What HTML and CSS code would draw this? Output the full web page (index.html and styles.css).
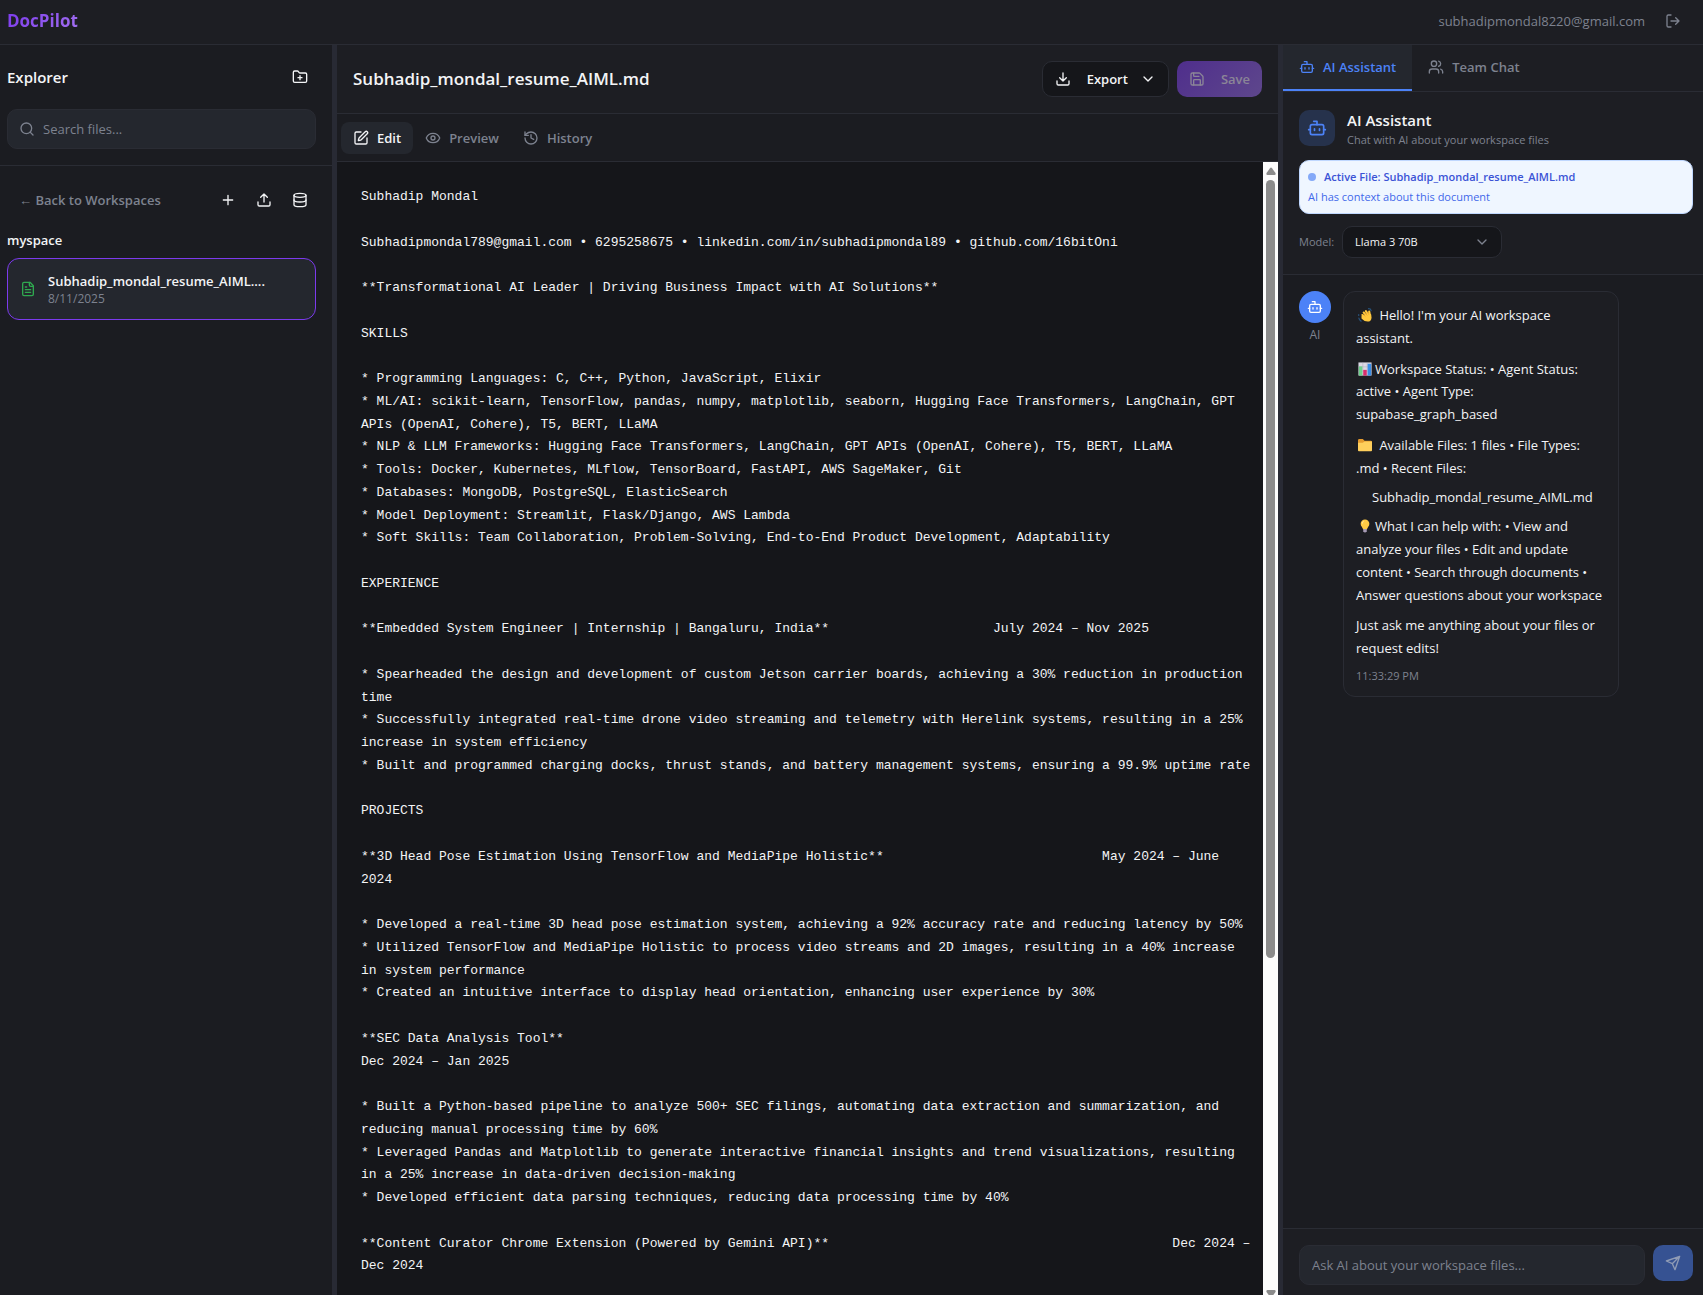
FILE: index.html
```html
<!DOCTYPE html>
<html lang="en">

<head>
    <meta charset="UTF-8">
    <meta name="viewport" content="width=device-width, initial-scale=1.0">
    <title>DocPilot</title>
    <link rel="stylesheet" href="styles.css">
</head>

<body>

    <!-- shared icons -->
    <svg class="sprite" aria-hidden="true">
        <symbol id="icon-bot" viewBox="0 0 24 24">
            <path d="M12 8V4H8" />
            <rect width="16" height="12" x="4" y="8" rx="2" />
            <path d="M2 14h2M20 14h2M15 13v2M9 13v2" />
        </symbol>
        <symbol id="icon-chevron" viewBox="0 0 24 24">
            <path d="m6 9 6 6 6-6" />
        </symbol>
    </svg>

    <header class="topbar">
        <h1 class="logo">DocPilot</h1>
        <div class="account">
            <span>subhadipmondal8220@gmail.com</span>
            <button class="icon-btn" aria-label="Log out">
                <svg class="icon" viewBox="0 0 24 24"><path d="M9 21H5a2 2 0 0 1-2-2V5a2 2 0 0 1 2-2h4" /><path d="m16 17 5-5-5-5M21 12H9" /></svg>
            </button>
        </div>
    </header>

    <div class="layout">

        <aside class="explorer">
            <div class="explorer-head">
                <div class="row">
                    <h2>Explorer</h2>
                    <button class="icon-btn" aria-label="New folder">
                        <svg class="icon" viewBox="0 0 24 24"><path d="M12 10v6M9 13h6" /><path d="M20 20a2 2 0 0 0 2-2V8a2 2 0 0 0-2-2h-7.9a2 2 0 0 1-1.69-.9L9.6 3.9A2 2 0 0 0 7.93 3H4a2 2 0 0 0-2 2v13a2 2 0 0 0 2 2Z" /></svg>
                    </button>
                </div>
                <label class="search">
                    <svg class="icon" viewBox="0 0 24 24"><circle cx="11" cy="11" r="8" /><path d="m21 21-4.3-4.3" /></svg>
                    <input type="text" placeholder="Search files..." aria-label="Search files">
                </label>
            </div>

            <div class="explorer-body">
                <div class="row">
                    <button class="back">← Back to Workspaces</button>
                    <div class="actions">
                        <button class="icon-btn" aria-label="New file">
                            <svg class="icon" viewBox="0 0 24 24"><path d="M5 12h14M12 5v14" /></svg>
                        </button>
                        <button class="icon-btn" aria-label="Upload">
                            <svg class="icon" viewBox="0 0 24 24"><path d="M21 15v4a2 2 0 0 1-2 2H5a2 2 0 0 1-2-2v-4" /><path d="m17 8-5-5-5 5M12 3v12" /></svg>
                        </button>
                        <button class="icon-btn" aria-label="Database">
                            <svg class="icon" viewBox="0 0 24 24"><ellipse cx="12" cy="5" rx="9" ry="3" /><path d="M3 5v14a9 3 0 0 0 18 0V5" /><path d="M3 12a9 3 0 0 0 18 0" /></svg>
                        </button>
                    </div>
                </div>
                <h3>myspace</h3>
                <button class="file">
                    <svg class="icon" viewBox="0 0 24 24"><path d="M15 2H6a2 2 0 0 0-2 2v16a2 2 0 0 0 2 2h12a2 2 0 0 0 2-2V7Z" /><path d="M14 2v4a2 2 0 0 0 2 2h4M10 9H8M16 13H8M16 17H8" /></svg>
                    <span class="file-info">
                        <strong>Subhadip_mondal_resume_AIML....</strong>
                        <small>8/11/2025</small>
                    </span>
                </button>
            </div>
        </aside>

        <div class="divider"></div>

        <main class="editor">
            <div class="editor-head">
                <h2>Subhadip_mondal_resume_AIML.md</h2>
                <div class="editor-buttons">
                    <button class="btn-export">
                        <svg class="icon" viewBox="0 0 24 24"><path d="M21 15v4a2 2 0 0 1-2 2H5a2 2 0 0 1-2-2v-4" /><path d="m7 10 5 5 5-5M12 15V3" /></svg>
                        <span>Export</span>
                        <svg class="icon"><use href="#icon-chevron" /></svg>
                    </button>
                    <button class="btn-save" disabled>
                        <svg class="icon" viewBox="0 0 24 24"><path d="M15.2 3a2 2 0 0 1 1.4.6l3.8 3.8a2 2 0 0 1 .6 1.4V19a2 2 0 0 1-2 2H5a2 2 0 0 1-2-2V5a2 2 0 0 1 2-2z" /><path d="M17 21v-7a1 1 0 0 0-1-1H8a1 1 0 0 0-1 1v7M7 3v4a1 1 0 0 0 1 1h7" /></svg>
                        Save
                    </button>
                </div>
            </div>

            <nav class="tabs">
                <button class="tab active">
                    <svg class="icon" viewBox="0 0 24 24"><path d="M12 3H5a2 2 0 0 0-2 2v14a2 2 0 0 0 2 2h14a2 2 0 0 0 2-2v-7" /><path d="M18.375 2.625a1 1 0 0 1 3 3l-9.013 9.014a2 2 0 0 1-.853.505l-2.873.84a.5.5 0 0 1-.62-.62l.84-2.873a2 2 0 0 1 .506-.852z" /></svg>
                    Edit
                </button>
                <button class="tab">
                    <svg class="icon" viewBox="0 0 24 24"><path d="M2.062 12.348a1 1 0 0 1 0-.696 10.75 10.75 0 0 1 19.876 0 1 1 0 0 1 0 .696 10.75 10.75 0 0 1-19.876 0" /><circle cx="12" cy="12" r="3" /></svg>
                    Preview
                </button>
                <button class="tab">
                    <svg class="icon" viewBox="0 0 24 24"><path d="M3 12a9 9 0 1 0 9-9 9.75 9.75 0 0 0-6.74 2.74L3 8" /><path d="M3 3v5h5M12 7v5l4 2" /></svg>
                    History
                </button>
            </nav>

            <div class="document">
                <textarea aria-label="Document text" spellcheck="false">Subhadip Mondal

Subhadipmondal789@gmail.com • 6295258675 • linkedin.com/in/subhadipmondal89 • github.com/16bitOni

**Transformational AI Leader | Driving Business Impact with AI Solutions**

SKILLS

* Programming Languages: C, C++, Python, JavaScript, Elixir
* ML/AI: scikit-learn, TensorFlow, pandas, numpy, matplotlib, seaborn, Hugging Face Transformers, LangChain, GPT APIs (OpenAI, Cohere), T5, BERT, LLaMA
* NLP &amp; LLM Frameworks: Hugging Face Transformers, LangChain, GPT APIs (OpenAI, Cohere), T5, BERT, LLaMA
* Tools: Docker, Kubernetes, MLflow, TensorBoard, FastAPI, AWS SageMaker, Git
* Databases: MongoDB, PostgreSQL, ElasticSearch
* Model Deployment: Streamlit, Flask/Django, AWS Lambda
* Soft Skills: Team Collaboration, Problem-Solving, End-to-End Product Development, Adaptability

EXPERIENCE

**Embedded System Engineer | Internship | Bangaluru, India**                     July 2024 – Nov 2025

* Spearheaded the design and development of custom Jetson carrier boards, achieving a 30% reduction in production time
* Successfully integrated real-time drone video streaming and telemetry with Herelink systems, resulting in a 25% increase in system efficiency
* Built and programmed charging docks, thrust stands, and battery management systems, ensuring a 99.9% uptime rate

PROJECTS

**3D Head Pose Estimation Using TensorFlow and MediaPipe Holistic**                            May 2024 – June 2024

* Developed a real-time 3D head pose estimation system, achieving a 92% accuracy rate and reducing latency by 50%
* Utilized TensorFlow and MediaPipe Holistic to process video streams and 2D images, resulting in a 40% increase in system performance
* Created an intuitive interface to display head orientation, enhancing user experience by 30%

**SEC Data Analysis Tool**
Dec 2024 – Jan 2025

* Built a Python-based pipeline to analyze 500+ SEC filings, automating data extraction and summarization, and reducing manual processing time by 60%
* Leveraged Pandas and Matplotlib to generate interactive financial insights and trend visualizations, resulting in a 25% increase in data-driven decision-making
* Developed efficient data parsing techniques, reducing data processing time by 40%

**Content Curator Chrome Extension (Powered by Gemini API)**                                            Dec 2024 – Dec 2024
</textarea>
                <div class="scrollbar" aria-hidden="true">
                    <svg class="arrow" viewBox="0 0 10 8"><path d="M4 1.2Q5 0 6 1.2L9.5 6Q10 8 8.5 8h-7Q0 8 .5 6Z" /></svg>
                    <div class="thumb"></div>
                    <svg class="arrow down" viewBox="0 0 10 8"><path d="M4 1.2Q5 0 6 1.2L9.5 6Q10 8 8.5 8h-7Q0 8 .5 6Z" /></svg>
                </div>
            </div>
        </main>

        <div class="divider"></div>

        <aside class="assistant">
            <nav class="chat-tabs">
                <button class="chat-tab active">
                    <svg class="icon"><use href="#icon-bot" /></svg>
                    AI Assistant
                </button>
                <button class="chat-tab">
                    <svg class="icon" viewBox="0 0 24 24"><path d="M16 21v-2a4 4 0 0 0-4-4H6a4 4 0 0 0-4 4v2" /><circle cx="9" cy="7" r="4" /><path d="M22 21v-2a4 4 0 0 0-3-3.87M16 3.13a4 4 0 0 1 0 7.75" /></svg>
                    Team Chat
                </button>
            </nav>

            <section class="chat-head">
                <div class="chat-title">
                    <div class="bot-box"><svg class="icon"><use href="#icon-bot" /></svg></div>
                    <div>
                        <h2>AI Assistant</h2>
                        <p>Chat with AI about your workspace files</p>
                    </div>
                </div>
                <div class="active-file">
                    <div class="active-name"><span class="dot"></span>Active File: Subhadip_mondal_resume_AIML.md</div>
                    <div>AI has context about this document</div>
                </div>
                <div class="model">
                    <label for="model">Model:</label>
                    <div class="select-box">
                        <select id="model">
                            <option>Llama 3 70B</option>
                        </select>
                        <svg class="icon"><use href="#icon-chevron" /></svg>
                    </div>
                </div>
            </section>

            <section class="messages">
                <div class="sender">
                    <div class="avatar"><svg class="icon"><use href="#icon-bot" /></svg></div>
                    <span>AI</span>
                </div>
                <div class="bubble">
                    <p>
                        <svg class="emoji" viewBox="0 0 16 16" role="img" aria-label="waving hand"><path fill="none" stroke="#ffc83d" stroke-width="2.4" stroke-linecap="round" d="m5 8 3.500 3M6.500 5.200 10 9M9 3.500l3 4.500M12.800 4l1 5" /><path fill="#ffc83d" d="m4 9 4-1 3-2 4 1 .5 4q-.5 4.500-4.500 4.500Q7 15.500 4 12Z" /><path fill="none" stroke="#e08b25" stroke-width=".6" d="m6 7.500 2.500 2M8 5.500l2.500 3M10.800 4.500l1.500 3" /><path fill="none" stroke="#28527a" stroke-width="1.4" stroke-linecap="round" d="M12 .8q2.500 0 3 2.200M1 11.500q.5 2.500 2.500 3.500M.8 7.500v1" /></svg>
                        Hello! I'm your AI workspace assistant.
                    </p>
                    <p>
                        <svg class="emoji tight" viewBox="0 0 16 16" role="img" aria-label="bar chart"><rect width="15" height="15" x=".5" y=".5" fill="#dcd8e4" /><path fill="none" stroke="#aaa5b5" stroke-width=".5" d="M.5 5.5h15M.5 10.5h15M5.5.5v15M10.5.5v15" /><path fill="#6fd08c" d="M1 5h4v10.5H1z" /><path fill="#d92d6c" d="M6 9h4v6.5H6z" /><path fill="#3a8ee6" d="M11 2h4v13.5h-4z" /></svg>Workspace Status: • Agent Status: active • Agent Type: supabase_graph_based
                    </p>
                    <p>
                        <svg class="emoji" viewBox="0 0 16 16" role="img" aria-label="folder"><path fill="#e59b2f" d="M0 2.500Q0 1 1.500 1h4L7.500 3h7Q16 3 16 4.500V13H0z" /><path fill="#ffcf5c" d="M0 5.500h5.500l2-1.500H16v10q0 1-1 1H1q-1 0-1-1z" /></svg>
                        Available Files: 1 files • File Types: .md • Recent Files:
                    </p>
                    <ul>
                        <li>Subhadip_mondal_resume_AIML.md</li>
                    </ul>
                    <p>
                        <svg class="emoji tight" viewBox="0 0 16 16" role="img" aria-label="light bulb"><path fill="#ffcb45" d="M8 .5a5 5 0 0 1 5 5q0 2-1.500 3.500L10 12H6L4.500 9Q3 7.500 3 5.500a5 5 0 0 1 5-5" /><path fill="#fff1b5" d="M7 2q-3 1-2 4 1-3 2-4" /><path fill="#a79bb5" d="M6 11.500h4V14q-2 3-4 0z" /></svg>What I can help with: • View and analyze your files • Edit and update content • Search through documents • Answer questions about your workspace
                    </p>
                    <p>Just ask me anything about your files or request edits!</p>
                    <time>11:33:29 PM</time>
                </div>
            </section>

            <form class="composer">
                <input type="text" placeholder="Ask AI about your workspace files..." aria-label="Message">
                <button type="submit" aria-label="Send" disabled>
                    <svg class="icon" viewBox="0 0 24 24"><path d="m22 2-7 20-4-9-9-4ZM22 2 11 13" /></svg>
                </button>
            </form>
        </aside>

    </div>

</body>

</html>
```

FILE: styles.css
```css
* {
    box-sizing: border-box;
}

body {
    display: flex;
    flex-direction: column;
    height: 100vh;
    margin: 0;
    overflow: hidden;
    background-color: #1b1c21;
    color: #f3f4f6;
    font-family: "Open Sans", "Noto Sans", sans-serif;
    font-size: 13px;
    line-height: 20px;
}

h1, h2, h3, p, ul {
    margin: 0;
    padding: 0;
}

button, input, select, textarea {
    font: inherit;
    color: inherit;
}

button {
    display: flex;
    align-items: center;
    padding: 0;
    border: none;
    background: none;
    cursor: pointer;
    white-space: nowrap;
}

input::placeholder {
    color: #7d828f;
    opacity: 1;
}

.sprite {
    display: none;
}

.icon {
    width: 16px;
    height: 16px;
    flex-shrink: 0;
    fill: none;
    stroke: currentColor;
    stroke-width: 2;
    stroke-linecap: round;
    stroke-linejoin: round;
}

.row {
    display: flex;
    align-items: center;
    justify-content: space-between;
}

.icon-btn {
    justify-content: center;
    width: 32px;
    height: 32px;
}

/* top bar */
.topbar {
    display: flex;
    align-items: center;
    justify-content: space-between;
    height: 45px;
    flex-shrink: 0;
    padding: 0 14px 2px 7px;
    border-bottom: 1px solid #2a2c34;
    background-color: #1d1e23;
}

.logo {
    font-size: 17px;
    font-weight: bold;
    background: linear-gradient(135deg, #7c3aed, #a270f0);
    background-clip: text;
    -webkit-background-clip: text;
    color: transparent;
}

.account {
    display: flex;
    align-items: center;
    gap: 12px;
    color: #7d828f;
}

.layout {
    display: grid;
    grid-template-columns: 332px 5px minmax(0, 1fr) 5px 420px;
    flex: 1;
    min-height: 0;
}

.divider {
    background-color: #282a34;
}

/* file explorer */
.explorer-head {
    display: flex;
    flex-direction: column;
    gap: 16px;
    padding: 16px 16px 16px 7px;
    border-bottom: 1px solid #2a2c34;
}

.explorer h2 {
    font-size: 15px;
    font-weight: 600;
}

.search {
    display: flex;
    align-items: center;
    gap: 8px;
    height: 40px;
    padding: 0 11px;
    border: 1px solid #2a2c34;
    border-radius: 10px;
    background-color: #24272e;
    color: #7d828f;
}

.search input {
    flex: 1;
    min-width: 0;
    padding: 0;
    border: none;
    outline: none;
    background: none;
}

.explorer-body {
    padding: 18px 16px 16px 7px;
}

.back {
    padding: 0 12px;
    color: #7d828f;
    font-weight: 600;
}

.actions {
    display: flex;
    gap: 4px;
}

.explorer h3 {
    margin: 14px 0 8px;
    font-size: 13px;
    font-weight: 600;
}

.file {
    gap: 12px;
    width: 100%;
    height: 62px;
    padding: 0 12px;
    border: 1px solid #7c3aed;
    border-radius: 12px;
    background-color: #24272e;
    text-align: left;
}

.file .icon {
    color: #2fa84f;
}

.file-info {
    display: flex;
    flex-direction: column;
}

.file-info strong {
    font-weight: 600;
}

.file-info small {
    font-size: 12px;
    line-height: 16px;
    color: #7d828f;
}

/* editor */
.editor {
    display: flex;
    flex-direction: column;
    min-width: 0;
    min-height: 0;
}

.editor-head {
    display: flex;
    align-items: center;
    justify-content: space-between;
    padding: 16px;
    border-bottom: 1px solid #2a2c34;
    background-color: #1d1e23;
}

.editor-head h2 {
    font-size: 17px;
    font-weight: 600;
}

.editor-buttons {
    display: flex;
    gap: 8px;
}

.btn-export,
.btn-save {
    height: 36px;
    padding: 0 12px;
    border-radius: 10px;
    font-weight: 600;
}

.btn-export {
    gap: 12px;
    border: 1px solid #2a2c34;
    background-color: #15161a;
}

.btn-export span {
    padding-left: 4px;
}

.btn-save {
    gap: 16px;
    background: linear-gradient(135deg, #4f2e8c, #5e478c);
    color: #8b8597;
}

.tabs {
    display: flex;
    padding: 8px 4px 7px;
    border-bottom: 1px solid #2a2c34;
}

.tab {
    gap: 8px;
    height: 32px;
    padding: 0 12px;
    border-radius: 8px;
    color: #7d828f;
    font-weight: 600;
}

.tab.active {
    background-color: #24272e;
    color: #f3f4f6;
}

.document {
    display: flex;
    flex: 1;
    min-height: 0;
    background-color: #15161a;
}

.document textarea {
    flex: 1;
    min-width: 0;
    padding: 24px 8px 0 24px;
    border: none;
    outline: none;
    resize: none;
    scrollbar-width: none;
    background: none;
    font-family: "Liberation Mono", monospace;
    font-size: 13px;
    line-height: 1.75;
}

.scrollbar {
    display: flex;
    flex-direction: column;
    align-items: center;
    width: 15px;
    padding-top: 5px;
    overflow: hidden;
    background-color: #fcfcfc;
}

.thumb {
    width: 9px;
    height: 69%;
    margin: 5px 0 auto;
    border-radius: 5px;
    background-color: #8b8b8b;
}

.arrow {
    width: 10px;
    height: 8px;
    flex-shrink: 0;
    fill: #8b8b8b;
}

.arrow.down {
    margin-bottom: -3px;
    transform: rotate(180deg);
}

/* assistant panel */
.assistant {
    display: flex;
    flex-direction: column;
    min-height: 0;
}

.chat-tabs {
    display: flex;
    border-bottom: 1px solid #2a2c34;
    background-color: #1d1e23;
}

.chat-tab {
    gap: 8px;
    height: 46px;
    padding: 0 16px;
    border-bottom: 2px solid transparent;
    color: #7d828f;
    font-weight: 600;
}

.chat-tab.active {
    border-color: #4c82f7;
    background-color: #24272e;
    color: #4c82f7;
}

.chat-head {
    display: flex;
    flex-direction: column;
    gap: 12px;
    padding: 16px 10px 16px 16px;
    border-bottom: 1px solid #2a2c34;
    background-color: #1d1e23;
}

.chat-title {
    display: flex;
    align-items: center;
    gap: 12px;
}

.chat-title h2 {
    font-size: 15px;
    font-weight: 600;
    line-height: 24px;
}

.chat-title p {
    font-size: 11px;
    line-height: 16px;
    color: #7d828f;
}

.bot-box {
    display: flex;
    padding: 8px;
    border-radius: 10px;
    background-color: #26324c;
    color: #4c82f7;
}

.bot-box .icon {
    width: 20px;
    height: 20px;
}

.active-file {
    padding: 8px;
    border: 1px solid #bfd7fe;
    border-radius: 10px;
    background-color: #eff6ff;
    color: #3f68ea;
    font-size: 11px;
    line-height: 16px;
}

.active-name {
    display: flex;
    align-items: center;
    gap: 8px;
    margin-bottom: 4px;
    color: #3b53d6;
    font-weight: 600;
}

.dot {
    width: 8px;
    height: 8px;
    border-radius: 50%;
    background-color: #84a9f8;
}

.model {
    display: flex;
    align-items: center;
    gap: 8px;
    color: #7d828f;
    font-size: 11px;
}

.select-box {
    display: grid;
    align-items: center;
    width: 160px;
}

.select-box select,
.select-box .icon {
    grid-area: 1 / 1;
}

.select-box select {
    appearance: none;
    height: 32px;
    padding: 0 12px;
    border: 1px solid #2a2c34;
    border-radius: 10px;
    background-color: #15161a;
    color: #f3f4f6;
}

.select-box .icon {
    justify-self: end;
    margin-right: 12px;
    pointer-events: none;
}

.messages {
    display: flex;
    align-items: flex-start;
    gap: 12px;
    flex: 1;
    min-height: 0;
    padding: 16px;
}

.sender {
    display: flex;
    flex-direction: column;
    align-items: center;
    gap: 4px;
    color: #7d828f;
    font-size: 12px;
    line-height: 16px;
}

.avatar {
    display: flex;
    padding: 8px;
    border-radius: 50%;
    background-color: #4c82f7;
    color: #fff;
}

.bubble {
    max-width: 276px;
    padding: 12px;
    border: 1px solid #2a2c34;
    border-radius: 12px;
    background-color: #1d1e23;
}

.bubble p {
    margin-bottom: 8px;
    line-height: 1.75;
}

.bubble ul {
    margin-bottom: 8px;
    padding-left: 16px;
    list-style: none;
}

.bubble time {
    display: block;
    font-size: 11px;
    line-height: 16px;
    color: #7d828f;
}

.emoji {
    width: 14px;
    height: 14px;
    margin: 0 4px 0 2px;
    vertical-align: -2px;
}

.emoji.tight {
    margin-right: 3px;
}

.composer {
    display: flex;
    align-items: flex-start;
    gap: 8px;
    padding: 16px 10px 10px 16px;
    border-top: 1px solid #2a2c34;
    background-color: #1d1e23;
}

.composer input {
    flex: 1;
    min-width: 0;
    height: 40px;
    padding: 0 12px;
    border: 1px solid #2a2c34;
    border-radius: 10px;
    outline: none;
    background-color: #24272e;
}

.composer button {
    justify-content: center;
    width: 40px;
    height: 36px;
    border-radius: 10px;
    background-color: #365292;
    color: #8f9bb5;
}
```
